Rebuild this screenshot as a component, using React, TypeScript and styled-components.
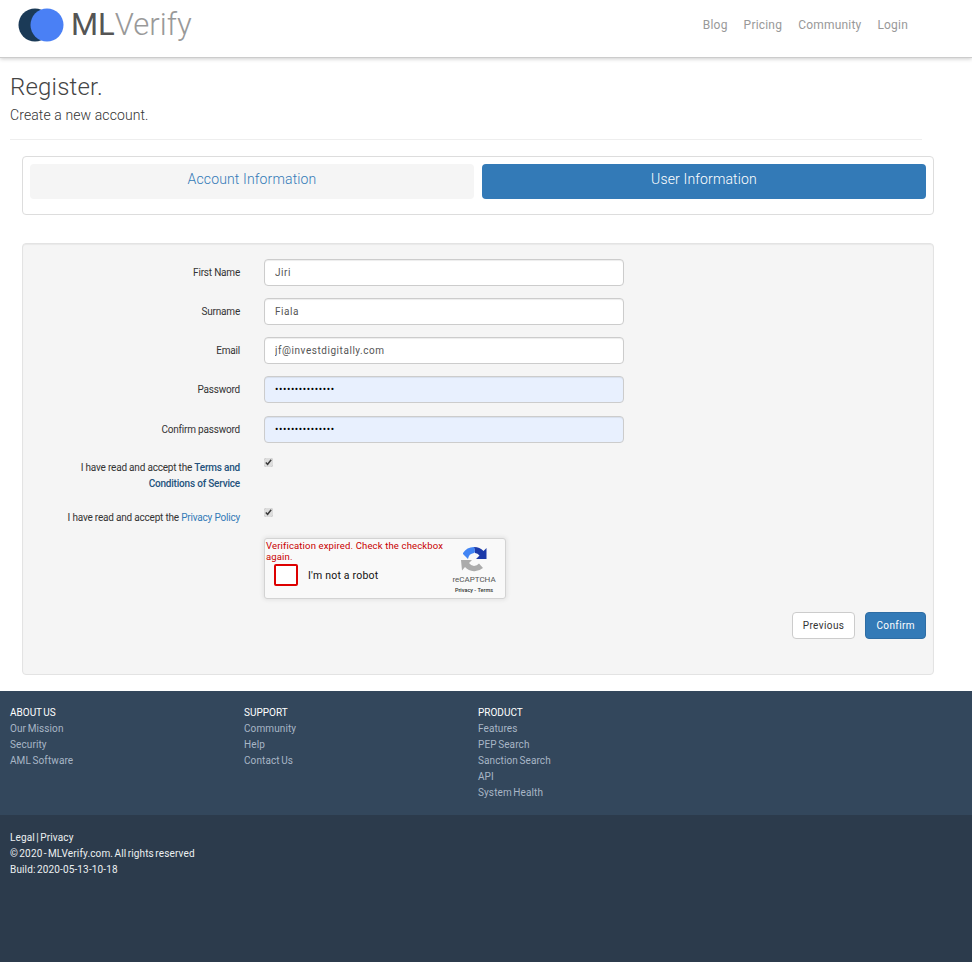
import * as React from 'react'
import styled, { createGlobalStyle } from 'styled-components'

const GlobalStyle = createGlobalStyle`
	html, body {
		margin: 0;
		padding: 0;
		background: #fff;
	}
	body {
		font-family: Roboto, 'Liberation Sans', sans-serif;
		font-weight: 300;
		font-size: 12px;
		line-height: 16px;
		color: #333;
	}
	* {
		box-sizing: border-box;
	}
`

const Navbar = styled.nav`
	display: flex;
	align-items: center;
	justify-content: space-between;
	height: 58px;
	padding: 0 64px 8px 18px;
	background: #fff;
	border-bottom: 1px solid #ccc;
	box-shadow: 0 1px 4px rgba(0, 0, 0, 0.2);
`

const Brand = styled.a`
	display: flex;
	align-items: center;
	gap: 7px;
	font-size: 31px;
	line-height: 40px;
	font-weight: 400;
	color: #555;
`

const BrandLight = styled.span`
	font-weight: 300;
	color: #999;
`

const NavLinks = styled.div`
	display: flex;
	gap: 16px;
`

const NavLink = styled.a`
	font-size: 12px;
	font-weight: 400;
	letter-spacing: 0.2px;
	color: #999;
`

const Main = styled.main`
	padding: 16px 38px 16px 10px;
`

const Title = styled.h2`
	margin: 0;
	font-size: 24px;
	line-height: 26px;
	font-weight: 300;
	letter-spacing: 0.2px;
	color: #444;
`

const Subtitle = styled.h4`
	margin: 7px 0 0;
	font-size: 14px;
	line-height: 16px;
	font-weight: 300;
	letter-spacing: 0.1px;
	color: #333;
`

const Rule = styled.hr`
	margin: 16px 0 16px;
	border: 0;
	border-top: 1px solid #eee;
	width: 912px;
`

const StepPanel = styled.div`
	display: flex;
	gap: 8px;
	margin-left: 12px;
	width: 912px;
	height: 59px;
	padding: 7px;
	border: 1px solid #ddd;
	border-radius: 4px;
`

const Step = styled.a<{ $active?: boolean }>`
	flex: 1;
	height: 35px;
	text-align: center;
	font-size: 14px;
	line-height: 30px;
	letter-spacing: 0.15px;
	border-radius: 4px;
	background: ${(p) => (p.$active ? '#337ab7' : '#f5f5f5')};
	color: ${(p) => (p.$active ? '#fff' : '#337ab7')};
`

const Well = styled.form`
	margin: 28px 0 0 12px;
	width: 912px;
	height: 432px;
	padding: 15px 7px 0 0;
	background: #f5f5f5;
	border: 1px solid #e3e3e3;
	border-radius: 4px;
	box-shadow: inset 0 1px 1px rgba(0, 0, 0, 0.05);
`

const Row = styled.div<{ $height?: number }>`
	display: grid;
	grid-template-columns: 217px 360px;
	column-gap: 24px;
	min-height: ${(p) => p.$height || 39}px;
`

const Label = styled.label`
	padding-top: 6px;
	text-align: right;
	font-size: 10px;
	font-weight: 400;
	line-height: 16px;
	letter-spacing: -0.2px;
	color: #333;
`

const CheckLabel = styled(Label)`
	padding-top: 4px;
`

const TermsLink = styled.a`
	color: #23527c;
	font-weight: 500;
`

const PolicyLink = styled.a`
	color: #337ab7;
`

const Input = styled.input<{ $filled?: boolean }>`
	display: block;
	width: 360px;
	height: 27px;
	padding: 0 10px;
	font: 400 10px Roboto, sans-serif;
	letter-spacing: ${(p) => (p.$filled ? '0.6px' : '0.55px')};
	color: ${(p) => (p.$filled ? '#000' : '#555')};
	background: ${(p) => (p.$filled ? '#e8f0fe' : '#fff')};
	border: 1px solid #ccc;
	border-radius: 4px;
	box-shadow: inset 0 1px 1px rgba(0, 0, 0, 0.075);
`

const Check = styled.input`
	display: block;
	margin: 2px 0 0;
	width: 9px;
	height: 9px;
	accent-color: #ddd;
`

const Captcha = styled.div`
	width: 242px;
	height: 61px;
	padding: 1px 1px 0;
	background: #f9f9f9;
	border: 1px solid #d3d3d3;
	border-radius: 3px;
	box-shadow: 0 0 4px 1px rgba(0, 0, 0, 0.08);
	color: #c80000;
	font-size: 9.5px;
	font-weight: 400;
	line-height: 11px;
	letter-spacing: 0.15px;
	display: grid;
	grid-template-columns: 184px 48px;
`

const CaptchaMain = styled.div`
	display: flex;
	flex-direction: column;
`

const CaptchaRow = styled.div`
	display: flex;
	align-items: center;
	gap: 10px;
	margin: 2px 0 0 8px;
	color: #111;
	font-size: 10.5px;
	font-weight: 400;
	letter-spacing: 0.2px;
`

const CaptchaBox = styled.span`
	display: block;
	width: 24px;
	height: 22px;
	background: #fff;
	border: 2px solid #d00;
	border-radius: 2px;
`

const CaptchaBrand = styled.div`
	display: flex;
	flex-direction: column;
	align-items: center;
	padding-top: 7px;
	color: #555;
	font-size: 8px;
	line-height: 10px;
	letter-spacing: 0;
`

const CaptchaIcon = styled.svg`
	display: block;
	margin-bottom: 2px;
`

const CaptchaTerms = styled.span`
	font-size: 5.5px;
	line-height: 10px;
	font-weight: 500;
	color: #333;
`

const Actions = styled.div`
	display: flex;
	justify-content: flex-end;
	gap: 10px;
	margin-top: 13px;
`

const Button = styled.button<{ $primary?: boolean }>`
	height: 27px;
	padding: 0 10px;
	font: 400 10px Roboto, sans-serif;
	letter-spacing: 0.4px;
	border-radius: 4px;
	border: 1px solid ${(p) => (p.$primary ? '#2e6da4' : '#ccc')};
	background: ${(p) => (p.$primary ? '#337ab7' : '#fff')};
	color: ${(p) => (p.$primary ? '#fff' : '#333')};
`

const FooterTop = styled.footer`
	display: grid;
	grid-template-columns: repeat(3, 234px);
	height: 124px;
	padding: 14px 10px 0;
	background: #33475c;
`

const FooterColumn = styled.div`
	display: flex;
	flex-direction: column;
	font-size: 10px;
	font-weight: 400;
	line-height: 16px;
	letter-spacing: 0.1px;
	word-spacing: -1px;
`

const FooterHead = styled.span`
	color: #fff;
	letter-spacing: 0;
`

const FooterLink = styled.a`
	color: #a8b6c6;
`

const FooterBottom = styled.div`
	display: flex;
	flex-direction: column;
	height: 147px;
	padding: 15px 10px 0;
	background: #2c3b4c;
	color: #ecf0f1;
	font-size: 10px;
	font-weight: 400;
	line-height: 16px;
	letter-spacing: 0.15px;
	word-spacing: -1.3px;
`

const Logo = () => (
	<svg width="46" height="34" viewBox="0 0 46 34">
		<circle cx="17" cy="17" r="16.5" fill="#1b3a57" />
		<circle cx="29" cy="17" r="16.5" fill="#4a80f5" />
	</svg>
)

const RecaptchaIcon = () => (
	<CaptchaIcon width="26" height="26" viewBox="0 0 26 26">
		<path d="M13 0a13 13 0 0 1 9.5 4l3-3v11H15l3.5-3.5A7 7 0 0 0 14 6z" fill="#1c3aa9" />
		<path d="M13 0A13 13 0 0 0 2 6v1l5 5a7 7 0 0 1 6-6l1-1z" fill="#4285f4" />
		<path d="M0 13h11l-3 3a7 7 0 0 0 5 3 7 7 0 0 0 5-2.5l4 4.5a13 13 0 0 1-18-1l-3 3.5z" fill="#ababab" />
	</CaptchaIcon>
)

const App = () => (
	<>
		<GlobalStyle />
		<Navbar>
			<Brand>
				<Logo />
				<span>
					ML<BrandLight>Verify</BrandLight>
				</span>
			</Brand>
			<NavLinks>
				<NavLink>Blog</NavLink>
				<NavLink>Pricing</NavLink>
				<NavLink>Community</NavLink>
				<NavLink>Login</NavLink>
			</NavLinks>
		</Navbar>
		<Main>
			<Title>Register.</Title>
			<Subtitle>Create a new account.</Subtitle>
			<Rule />
			<StepPanel>
				<Step>Account Information</Step>
				<Step $active>User Information</Step>
			</StepPanel>
			<Well>
				<Row>
					<Label>First Name</Label>
					<Input defaultValue="Jiri" />
				</Row>
				<Row>
					<Label>Surname</Label>
					<Input defaultValue="Fiala" />
				</Row>
				<Row>
					<Label>Email</Label>
					<Input defaultValue="jf@investdigitally.com" />
				</Row>
				<Row $height={40}>
					<Label>Password</Label>
					<Input $filled type="password" defaultValue="***************" />
				</Row>
				<Row $height={40}>
					<Label>Confirm password</Label>
					<Input $filled type="password" defaultValue="***************" />
				</Row>
				<Row $height={50}>
					<CheckLabel>
						I have read and accept the <TermsLink>Terms and<br />Conditions of Service</TermsLink>
					</CheckLabel>
					<Check type="checkbox" defaultChecked />
				</Row>
				<Row $height={32}>
					<CheckLabel>
						I have read and accept the <PolicyLink>Privacy Policy</PolicyLink>
					</CheckLabel>
					<Check type="checkbox" defaultChecked />
				</Row>
				<Row>
					<span />
					<Captcha>
						<CaptchaMain>
							Verification expired. Check the checkbox again.
							<CaptchaRow>
								<CaptchaBox />
								I'm not a robot
							</CaptchaRow>
						</CaptchaMain>
						<CaptchaBrand>
							<RecaptchaIcon />
							reCAPTCHA
							<CaptchaTerms>Privacy - Terms</CaptchaTerms>
						</CaptchaBrand>
					</Captcha>
				</Row>
				<Actions>
					<Button type="button">Previous</Button>
					<Button type="button" $primary>
						Confirm
					</Button>
				</Actions>
			</Well>
		</Main>
		<FooterTop>
			<FooterColumn>
				<FooterHead>ABOUT US</FooterHead>
				<FooterLink>Our Mission</FooterLink>
				<FooterLink>Security</FooterLink>
				<FooterLink>AML Software</FooterLink>
			</FooterColumn>
			<FooterColumn>
				<FooterHead>SUPPORT</FooterHead>
				<FooterLink>Community</FooterLink>
				<FooterLink>Help</FooterLink>
				<FooterLink>Contact Us</FooterLink>
			</FooterColumn>
			<FooterColumn>
				<FooterHead>PRODUCT</FooterHead>
				<FooterLink>Features</FooterLink>
				<FooterLink>PEP Search</FooterLink>
				<FooterLink>Sanction Search</FooterLink>
				<FooterLink>API</FooterLink>
				<FooterLink>System Health</FooterLink>
			</FooterColumn>
		</FooterTop>
		<FooterBottom>
			<span>Legal | Privacy</span>
			<span>© 2020 - MLVerify.com. All rights reserved</span>
			<span>Build: 2020-05-13-10-18</span>
		</FooterBottom>
	</>
)

export default App
